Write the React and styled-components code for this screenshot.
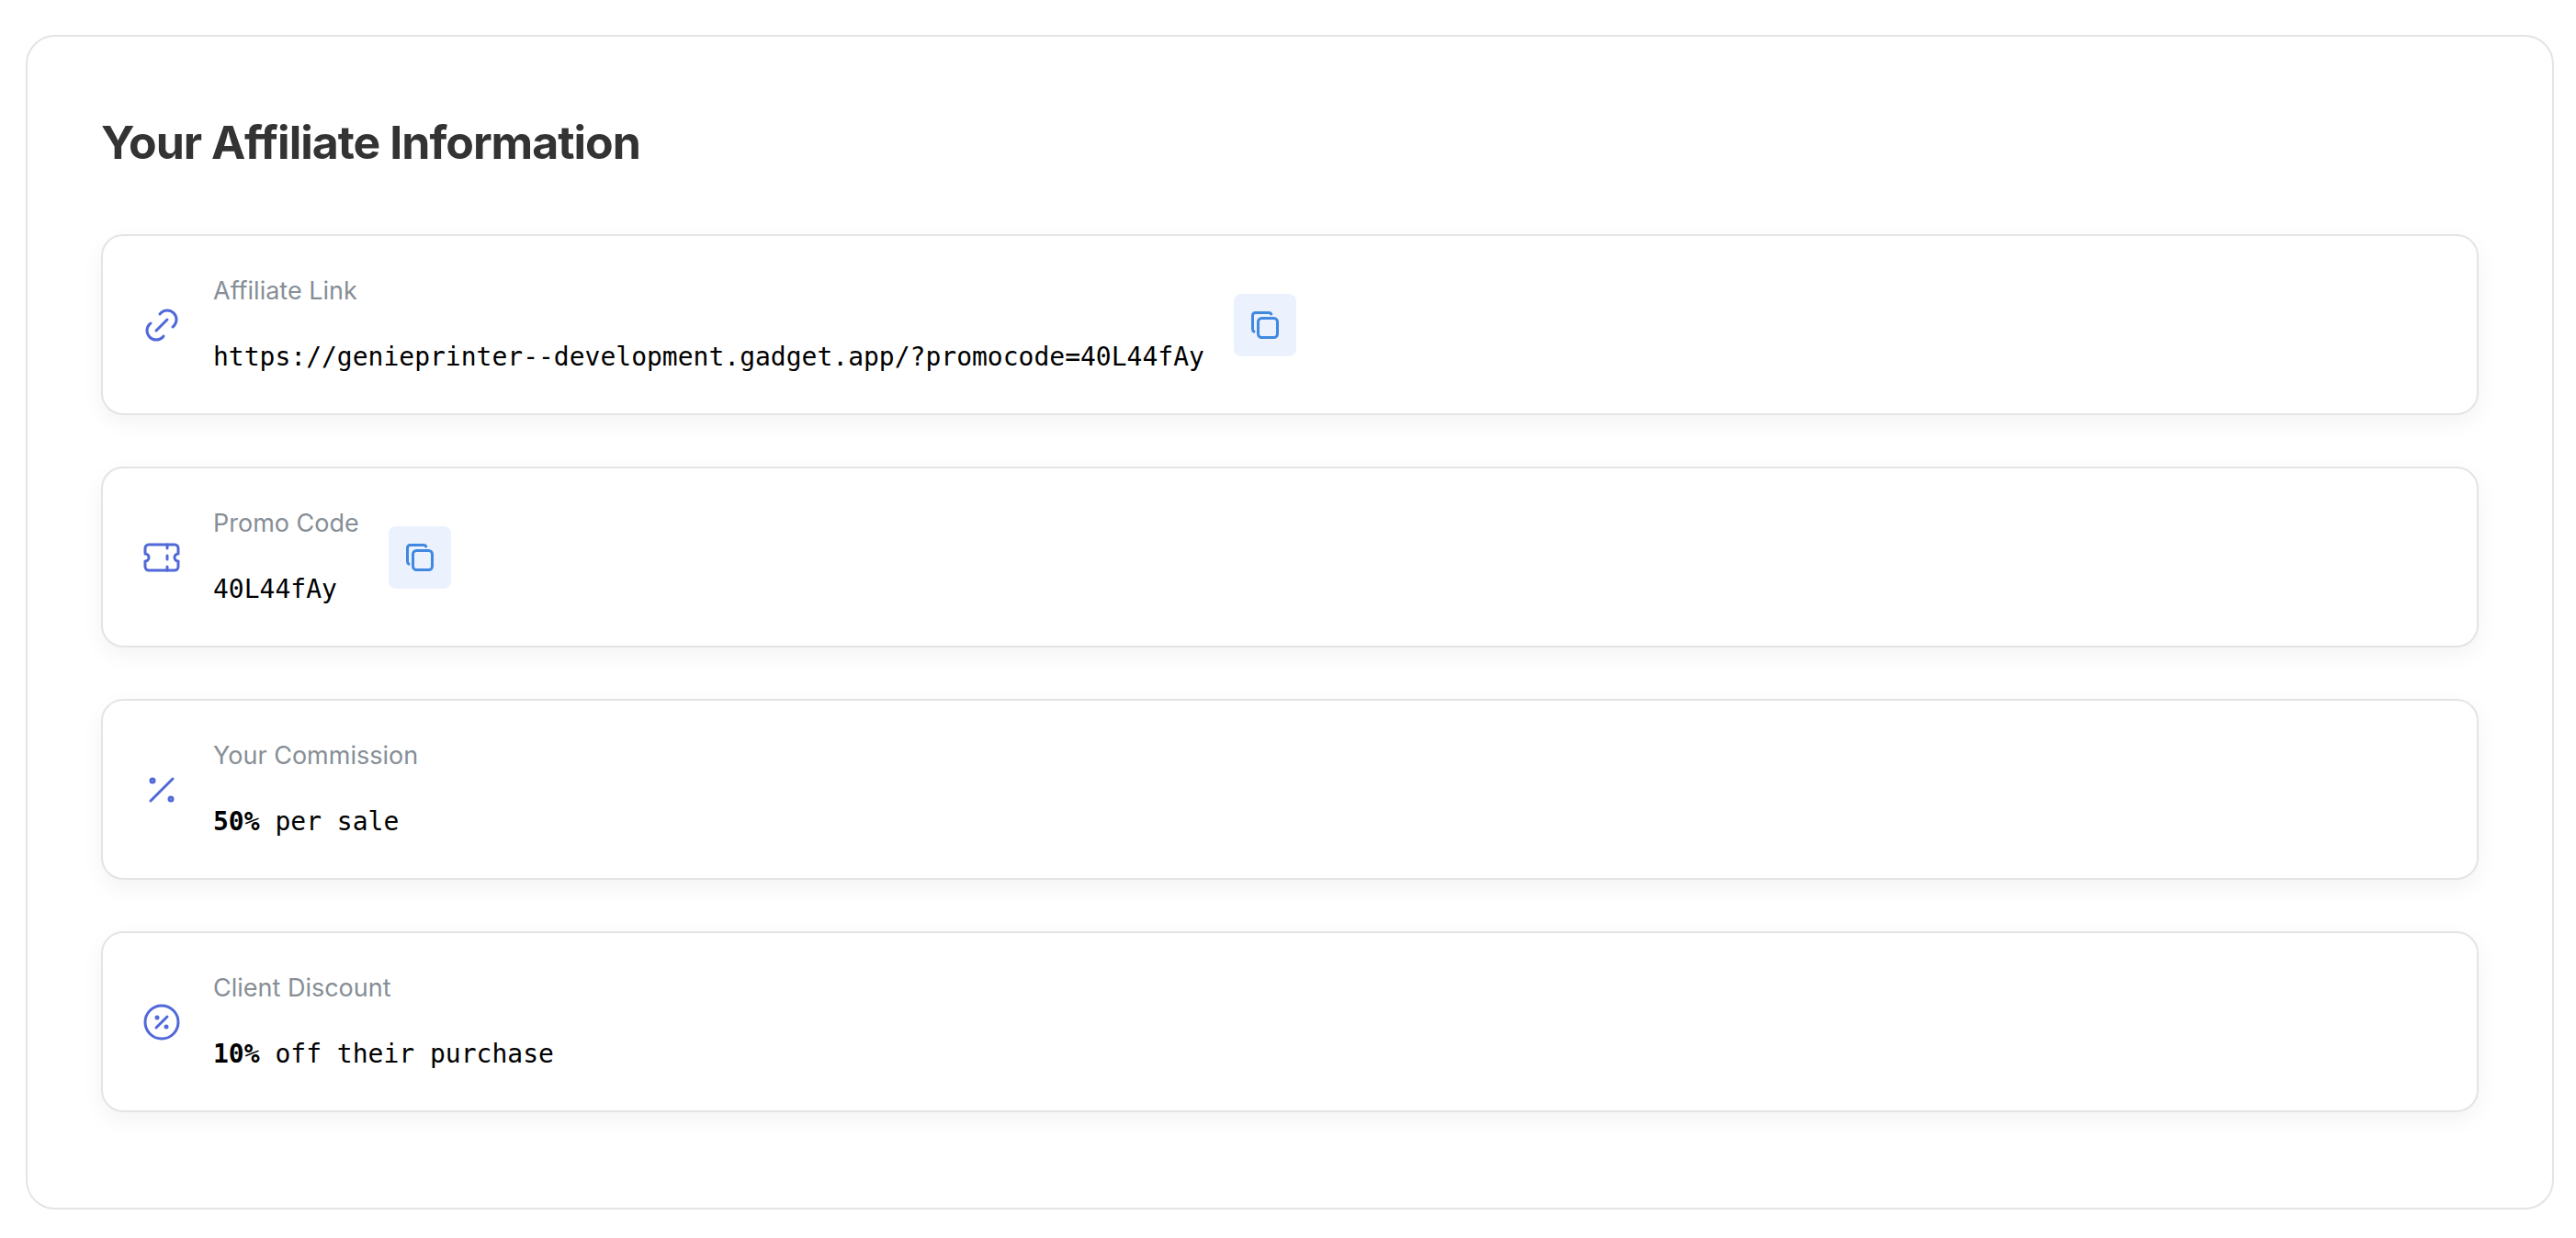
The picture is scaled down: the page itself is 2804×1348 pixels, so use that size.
import styled, { createGlobalStyle } from "styled-components";
import { TbCopy, TbDiscount, TbLink, TbPercentage, TbTicket } from "react-icons/tb";


const GlobalStyle = createGlobalStyle`
    * {
        box-sizing: border-box;
        margin: 0;
        padding: 0;
    }

    body {
        background-color: #fff;
        font-family: Inter, "Liberation Sans", sans-serif;
    }
`
const Page = styled.main`
    padding: 38px 24px 31px 28px;
`
const Panel = styled.section`
    padding: 80px 80px 104px;
    border: 2px solid #e4e4e4;
    border-radius: 32px;
`
const Title = styled.h2`
    margin-bottom: 64px;
    color: #333;
    font-size: 50px;
    font-weight: 700;
    line-height: 71px;
    letter-spacing: -1px;
`
const InfoList = styled.div`
    display: flex;
    flex-direction: column;
    gap: 56px;
`
const InfoCard = styled.div`
    display: flex;
    align-items: center;
    gap: 32px;
    padding: 40px;
    background-color: #fff;
    border: 2px solid #e4e4e4;
    border-radius: 24px;
    box-shadow: 0 8px 24px rgba(0, 0, 0, 0.05);

    > svg {
        flex-shrink: 0;
        width: 48px;
        height: 48px;
        color: #5068d8;
    }
`
const InfoText = styled.div`
    display: flex;
    flex-direction: column;
    gap: 31px;
    min-width: 0;
`
const Label = styled.p`
    color: #868e96;
    font-size: 27px;
    line-height: 40px;
`
const Value = styled.p`
    color: #000;
    font-family: "DejaVu Sans Mono", monospace;
    font-size: 28px;
    line-height: 42px;
    overflow-wrap: anywhere;
`
const CopyButton = styled.button`
    display: flex;
    justify-content: center;
    align-items: center;
    flex-shrink: 0;
    width: 68px;
    height: 68px;
    color: #4088e0;
    background-color: #ebf2fd;
    border: none;
    border-radius: 8px;
    cursor: pointer;

    &:hover {
        background-color: #dde9fb;
    }

    svg {
        width: 36px;
        height: 36px;
    }
`

const affiliate = {
    link: "https://genieprinter--development.gadget.app/?promocode=40L44fAy",
    code: "40L44fAy",
    commission: "50%",
    discount: "10%",
}


const InfoItem = ({icon: Icon, label, copyText, children}) => {
    const handleCopy = () => {
        navigator.clipboard?.writeText(copyText)
    }

    return (
        <InfoCard>
            <Icon strokeWidth={1.5} aria-hidden="true"/>
            <InfoText>
                <Label>{label}</Label>
                <Value>{children}</Value>
            </InfoText>
            {copyText && (
                <CopyButton type="button" aria-label={`Copy ${label}`} onClick={handleCopy}>
                    <TbCopy/>
                </CopyButton>
            )}
        </InfoCard>
    );
}

const App = () => {
    return (
        <>
            <GlobalStyle/>
            <Page>
                <Panel>
                    <Title>Your Affiliate Information</Title>
                    <InfoList>
                        <InfoItem icon={TbLink} label="Affiliate Link" copyText={affiliate.link}>
                            {affiliate.link}
                        </InfoItem>
                        <InfoItem icon={TbTicket} label="Promo Code" copyText={affiliate.code}>
                            {affiliate.code}
                        </InfoItem>
                        <InfoItem icon={TbPercentage} label="Your Commission">
                            <strong>{affiliate.commission}</strong> per sale
                        </InfoItem>
                        <InfoItem icon={TbDiscount} label="Client Discount">
                            <strong>{affiliate.discount}</strong> off their purchase
                        </InfoItem>
                    </InfoList>
                </Panel>
            </Page>
        </>
    );
}

export default App;
